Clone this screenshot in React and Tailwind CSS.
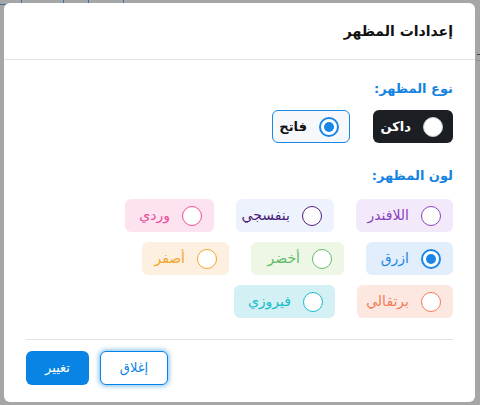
const colors = [
  { name: 'اللافندر', w: 'w-[97px]', box: 'bg-[#f2eafa] text-[#8a3fbf]', ring: 'border-[#8e44c4]' },
  { name: 'بنفسجي', w: 'w-[98px]', box: 'bg-[#edf2fd] text-[#4a1d7a]', ring: 'border-[#4a1d7a]' },
  { name: 'وردي', w: 'w-[89px]', box: 'bg-[#fde3f0] text-[#ec4c9b]', ring: 'border-[#ec4c9b]' },
  { name: 'ازرق', w: 'w-[87px]', box: 'bg-[#e2eefb] text-[#1a87e6] border-[#1a87e6]', ring: 'border-[#1a87e6]', active: true },
  { name: 'أخضر', w: 'w-[93px]', box: 'bg-[#eef7e6] text-[#5fb865]', ring: 'border-[#66bb6a]' },
  { name: 'أصفر', w: 'w-[87px]', box: 'bg-[#fdf0e0] text-[#f3a528]', ring: 'border-[#f3a528]' },
  { name: 'برتقالي', w: 'w-[96px]', box: 'bg-[#fde8e1] text-[#f47c58]', ring: 'border-[#f47c58]' },
  { name: 'فيروزي', w: 'w-[101px]', box: 'bg-[#d3f0f4] text-[#18bccb]', ring: 'border-[#18bccb]' },
];

function Radio({ active, ring }) {
  if (active) {
    return (
      <span className="w-5 h-5 rounded-full border-2 border-[#1a87e6] bg-white flex items-center justify-center shrink-0">
        <span className="w-[10px] h-[10px] rounded-full bg-[#1a87e6]" />
      </span>
    );
  }
  return <span className={`w-5 h-5 rounded-full border bg-white shrink-0 ${ring}`} />;
}

export default function App() {
  return (
    <div
      className="w-[480px] h-[405px] bg-[#a6a6a6] relative overflow-hidden"
      style={{ fontFamily: '"DejaVu Sans", "Noto Sans", sans-serif' }}
    >
      {/* page behind the overlay */}
      <div className="absolute inset-0 pointer-events-none">
        <div className="absolute left-0 top-[4px] w-[6px] h-px bg-[#3b6ea8]" />
        <div className="absolute left-[21px] top-0 w-px h-[3px] bg-[#3b6ea8]" />
        <div className="absolute left-[63px] top-0 w-px h-[3px] bg-[#3b6ea8]" />
        <div className="absolute left-[88px] top-0 w-px h-[3px] bg-[#3b6ea8]" />
        <div className="absolute left-[123px] top-0 w-px h-[3px] bg-[#3b6ea8]" />
        <div className="absolute right-0 top-[54px] w-[3px] h-px bg-[#444]" />
        <div className="absolute right-0 top-[60px] w-[4px] h-px bg-[#8c8c8c]" />
      </div>

      <div dir="rtl" className="relative mt-[3px] ml-[4px] w-[471px] h-[399px] bg-white rounded-md flex flex-col">
        <div className="h-[57px] px-[22px] flex items-center border-b border-[#e3e3e3]">
          <h2 className="text-[14px] font-bold text-[#111] pt-[1px]">إعدادات المظهر</h2>
        </div>

        <div className="px-[22px] flex-1 flex flex-col">
          <p className="mt-[19px] h-5 leading-5 text-[13px] font-bold text-[#1583e2]">نوع المظهر:</p>

          <div className="mt-[11px] flex gap-[23px]">
            <button className="w-[80px] h-[33px] rounded-md bg-[#1b1e22] text-white flex items-center gap-3 pr-[10px] text-[13px] font-bold">
              <span className="w-5 h-5 rounded-full bg-white border border-[#ccc] shrink-0" />
              <span>داكن</span>
            </button>
            <button className="w-[78px] h-[33px] rounded-md bg-[#f6f8fb] border border-[#1a87e6] text-[#111] flex items-center gap-3 pr-[10px] text-[13px] font-bold">
              <Radio active />
              <span>فاتح</span>
            </button>
          </div>

          <p className="mt-[23px] h-5 leading-5 text-[13px] font-bold text-[#1583e2]">لون المظهر:</p>

          <div className="mt-[13px] flex flex-wrap gap-x-[22px] gap-y-[10px]">
            {colors.map((c) => (
              <button
                key={c.name}
                className={`h-[33px] rounded-md border border-transparent flex items-center gap-3 pr-[11px] text-[14px] ${c.w} ${c.box}`}
              >
                <Radio active={c.active} ring={c.ring} />
                <span>{c.name}</span>
              </button>
            ))}
          </div>

          <div className="mt-[21px] border-t border-[#e3e3e3] pt-[11px] pb-[16px] flex gap-[11px] justify-end">
            <button className="w-[68px] h-[34px] rounded-md bg-white border border-[#0a84e4] text-[#0a84e4] text-[13px] shadow-[0_0_5px_1px_rgba(10,132,228,0.55)]">
              إغلاق
            </button>
            <button className="w-[63px] h-[34px] rounded-md bg-[#0a84e4] text-white text-[13px]">
              تغيير
            </button>
          </div>
        </div>
      </div>
    </div>
  );
}
